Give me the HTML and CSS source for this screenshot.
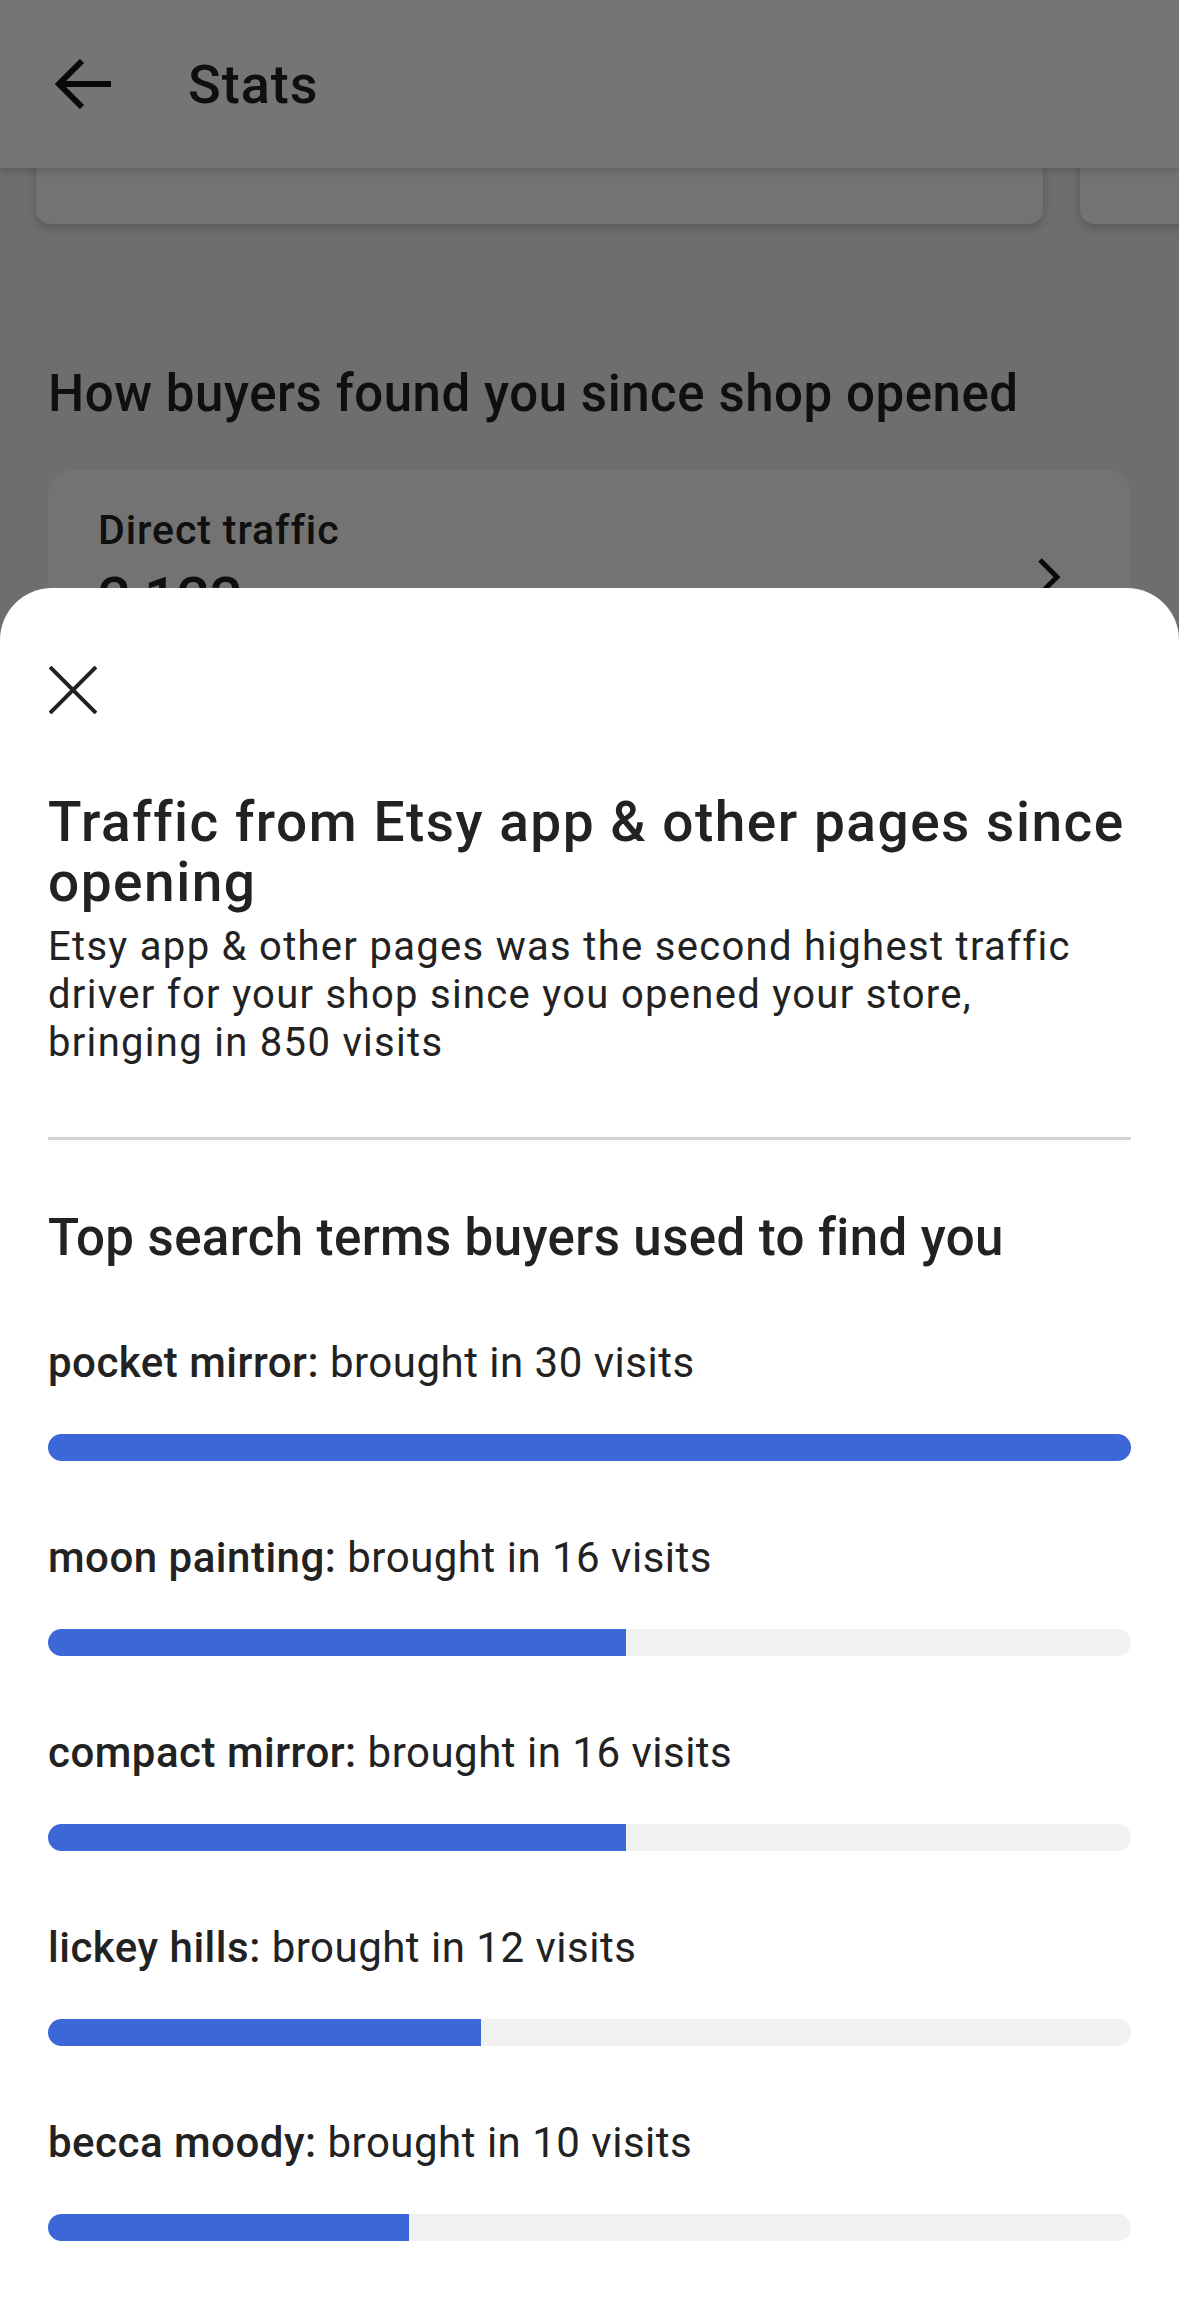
FILE: index.html
```html
<!DOCTYPE html>
<html lang="en">
<head>
  <meta charset="UTF-8">
  <title>Stats</title>
  <link rel="stylesheet" href="styles.css">
</head>
<body>

<div class="screen">
  <header class="topbar">
    <svg class="back-icon" width="56" height="50" viewBox="0 0 56 50">
      <path d="M4 25H56M27 2L4 25L27 48" fill="none" stroke="#141414" stroke-width="6"/>
    </svg>
    <h1 class="topbar-title">Stats</h1>
  </header>

  <main class="stats">
    <div class="summary-row">
      <div class="summary-card"></div>
      <div class="summary-card"></div>
    </div>

    <h2 class="section-title">How buyers found you since shop opened</h2>

    <div class="traffic-card">
      <div class="traffic-info">
        <div class="traffic-name">Direct traffic</div>
        <div class="traffic-count">2,123</div>
      </div>
      <svg class="chevron" width="24" height="40" viewBox="0 0 24 40">
        <path d="M3 3L20 20L3 37" fill="none" stroke="#141414" stroke-width="5"/>
      </svg>
    </div>
  </main>

  <div class="scrim"></div>

  <section class="sheet">
    <button class="close-btn" aria-label="Close">
      <svg width="48" height="48" viewBox="0 0 48 48">
        <path d="M1 1L47 47M47 1L1 47" stroke="#222" stroke-width="4"/>
      </svg>
    </button>

    <h2 class="sheet-title">Traffic from Etsy app &amp; other pages since opening</h2>
    <p class="sheet-text">Etsy app &amp; other pages was the second highest traffic driver for your shop since you opened your store, bringing in 850 visits</p>

    <hr class="divider">

    <h3 class="terms-title">Top search terms buyers used to find you</h3>

    <ul class="terms">
      <li class="term">
        <p class="term-label"><strong>pocket mirror:</strong> brought in 30 visits</p>
        <div class="bar"><div class="bar-fill" style="width: 100%"></div></div>
      </li>
      <li class="term">
        <p class="term-label"><strong>moon painting:</strong> brought in 16 visits</p>
        <div class="bar"><div class="bar-fill" style="width: 53.33%"></div></div>
      </li>
      <li class="term">
        <p class="term-label"><strong>compact mirror:</strong> brought in 16 visits</p>
        <div class="bar"><div class="bar-fill" style="width: 53.33%"></div></div>
      </li>
      <li class="term">
        <p class="term-label"><strong>lickey hills:</strong> brought in 12 visits</p>
        <div class="bar"><div class="bar-fill" style="width: 40%"></div></div>
      </li>
      <li class="term">
        <p class="term-label"><strong>becca moody:</strong> brought in 10 visits</p>
        <div class="bar"><div class="bar-fill" style="width: 33.33%"></div></div>
      </li>
    </ul>
  </section>
</div>

</body>
</html>
```

FILE: styles.css
```css
* { box-sizing: border-box; }

body {
  margin: 0;
  font-family: Roboto, "Liberation Sans", sans-serif;
  color: #222;
  background: #efefef;
}

.screen {
  position: relative;
  width: 1179px;
  height: 2297px;
  overflow: hidden;
}

/* top bar */
.topbar {
  position: relative;
  z-index: 2;
  height: 168px;
  display: flex;
  align-items: center;
  gap: 77px;
  padding-left: 55px;
  background: #fff;
  box-shadow: 0 3px 8px rgba(0, 0, 0, 0.18);
}
.topbar-title {
  margin: 0;
  font-size: 54px;
  font-weight: 500;
  letter-spacing: 1px;
  color: #222;
}

/* page behind the sheet, scrolled down a bit */
.stats { padding: 0 48px; }

.summary-row {
  display: flex;
  gap: 37px;
  margin: -144px -48px 0 -12px;
}
.summary-card {
  flex: 0 0 1007px;
  height: 200px;
  background: #fbfbfb;
  border-radius: 14px;
  box-shadow: 0 4px 8px rgba(0, 0, 0, 0.2);
}

.section-title {
  margin: 140px 0 46px;
  font-size: 51px;
  line-height: 60px;
  font-weight: 500;
  letter-spacing: 0.55px;
}

.traffic-card {
  display: flex;
  align-items: center;
  justify-content: space-between;
  padding: 36px 70px 40px 50px;
  background: #fafafa;
  border-radius: 24px;
}
.traffic-name {
  font-size: 41px;
  line-height: 48px;
  font-weight: 500;
  letter-spacing: 0.9px;
}
.traffic-count {
  margin-top: 12px;
  font-size: 58px;
  line-height: 64px;
  font-weight: 500;
}
.chevron { margin-top: 18px; }

.scrim {
  position: absolute;
  inset: 0;
  z-index: 5;
  background: rgba(0, 0, 0, 0.54);
}

/* bottom sheet */
.sheet {
  position: absolute;
  top: 588px;
  left: 0;
  right: 0;
  bottom: 0;
  z-index: 6;
  padding: 78px 48px 0;
  background: #fff;
  border-radius: 52px 52px 0 0;
}

.close-btn {
  display: block;
  padding: 0;
  border: 0;
  background: none;
  margin-left: 1px;
}
.close-btn svg { display: block; }

.sheet-title {
  margin: 78px 0 0;
  font-size: 55px;
  line-height: 60px;
  font-weight: 500;
  letter-spacing: 1.5px;
}

.sheet-text {
  margin: 11px 0 0;
  font-size: 40px;
  line-height: 48px;
  font-weight: 400;
  letter-spacing: 1.3px;
}

.divider {
  margin: 70px 0 0;
  border: 0;
  height: 3px;
  background: #d2d2d2;
}

.terms-title {
  margin: 68px 0 0;
  font-size: 51px;
  line-height: 60px;
  font-weight: 500;
  letter-spacing: 0.4px;
}

.terms {
  list-style: none;
  margin: 69px 0 0;
  padding: 0;
}
.term + .term { margin-top: 71px; }

.term-label {
  margin: 0;
  font-size: 42px;
  line-height: 52px;
  font-weight: 400;
  letter-spacing: 0.5px;
}
.term-label strong { font-weight: 500; }

.bar {
  margin-top: 45px;
  height: 27px;
  border-radius: 14px;
  background: #f1f1f1;
  overflow: hidden;
}
.bar-fill {
  height: 100%;
  background: #3b67d7;
}
```
